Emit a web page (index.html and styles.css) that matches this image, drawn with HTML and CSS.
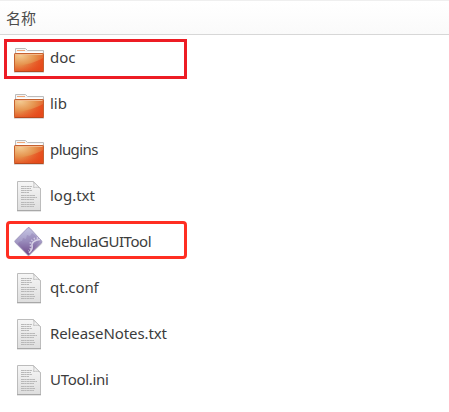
FILE: index.html
```html
<!DOCTYPE html>
<html lang="zh-CN">
<head>
<meta charset="utf-8">
<title>名称</title>
<link rel="stylesheet" href="styles.css">
</head>
<body>
<svg class="defs" width="0" height="0" aria-hidden="true">
  <defs>
    <radialGradient id="orange" cx=".2" cy=".1" r="1">
      <stop offset="0" stop-color="#f3cb92"/><stop offset=".5" stop-color="#e69550"/><stop offset=".85" stop-color="#e5622c"/><stop offset="1" stop-color="#df5120"/>
    </radialGradient>
    <linearGradient id="ember" x1="0" y1="0" x2="1" y2="0">
      <stop offset=".2" stop-color="#e8481a" stop-opacity="0"/><stop offset="1" stop-color="#e8481a" stop-opacity=".8"/>
    </linearGradient>
    <linearGradient id="paper" x1="0" y1="0" x2="0" y2="1">
      <stop offset="0" stop-color="#f6f6f6"/><stop offset="1" stop-color="#dedede"/>
    </linearGradient>
    <linearGradient id="purple" x1="0" y1="0" x2="0" y2="1">
      <stop offset="0" stop-color="#c4c4e3"/><stop offset=".5" stop-color="#a59bc6"/><stop offset="1" stop-color="#704a89"/>
    </linearGradient>
  </defs>
  <symbol id="folder" viewBox="0 0 32 32">
    <path d="M2.500 12V6.500H12.500L14.500 8.500H30.500V12" fill="#f5f5f5" stroke="#bcbcbc"/>
    <path d="M4 8.500H12" stroke="#efa777"/>
    <path d="M4 10.500H29" stroke="#fff"/>
    <path d="M1 30.500H31" stroke="#000" stroke-opacity=".14"/>
    <rect x="1.500" y="11.500" width="29" height="18" rx=".6" fill="url(#orange)" stroke="#c6612f"/>
    <path d="M30 16C23 20 14 23 2 24V29H30Z" fill="url(#ember)"/>
    <path d="M2.500 12.500H29.500" stroke="#f3b98b"/>
    <path d="M1.500 29.500H30.500" stroke="#b8481d"/>
  </symbol>
  <symbol id="file" viewBox="0 0 32 32">
    <path d="M4 31.500H28" stroke="#000" stroke-opacity=".1"/>
    <path d="M4.500 1.500H20.500L27.500 8.500V30.500H4.500Z" fill="url(#paper)" stroke="#bcbcbc"/>
    <path d="M4 30.500H28" stroke="#a8a8a8"/>
    <path d="M20 1.500C21.500 3 21 5.500 20.500 7.500C23 7 26 7 27.500 8.500Z" fill="#f4f4f4" stroke="#c2c2c2"/>
    <path d="M8 6.500H19M8 8.500H18M8 10.500H19M8 12.500H16M8 15.500H22M8 17.500H24M8 19.500H21M8 22.500H21M8 24.500H22M8 26.500H21" stroke="#b8b8b8" stroke-dasharray="3 .3 2 .3"/>
  </symbol>
  <symbol id="app" viewBox="0 0 32 32">
    <path d="M15 2.800 2.500 16 15 29.800 29 16.500Z" transform="translate(.5 1)" fill="#000" opacity=".13"/>
    <path d="M15 1.600Q16 1.300 17 2.300L28.500 14.700Q29.500 16 28.500 17L16.500 28.700Q15.500 29.700 14.500 28.700L2.200 16.500Q1.300 15.500 2.200 14.500Z" fill="url(#purple)" stroke="#9990b8" stroke-width=".8"/>
    <path d="M15.500 28.300 5 18Q6 15 9 15L10 12 13 13 14 9 17 10 19 7 22 9 27 15Z" fill="#66458b" opacity=".2"/>
    <path d="M27 13.500C21 14 18 17 19.200 20.500C19.500 23 18 25 16 27" fill="none" stroke="#d6d0e6" stroke-width="1.500"/>
    <path d="M25 12C19.500 12 16 16 17.800 20.500C18 22.500 17 24 15.500 25" fill="none" stroke="#d0c9e2" stroke-width="1.800" stroke-dasharray="1.300 1.700"/>
  </symbol>
</svg>
<header class="header">名称</header>
<main class="list">
  <div class="row"><svg class="icon"><use href="#folder"/></svg><span class="name">doc</span><i class="mark mark-square"></i></div>
  <div class="row"><svg class="icon"><use href="#folder"/></svg><span class="name">lib</span></div>
  <div class="row"><svg class="icon"><use href="#folder"/></svg><span class="name tight">plugins</span></div>
  <div class="row"><svg class="icon"><use href="#file"/></svg><span class="name">log.txt</span></div>
  <div class="row"><svg class="icon"><use href="#app"/></svg><span class="name snug">NebulaGUITool</span><i class="mark mark-round"></i></div>
  <div class="row"><svg class="icon"><use href="#file"/></svg><span class="name slim">qt.conf</span></div>
  <div class="row"><svg class="icon"><use href="#file"/></svg><span class="name slim">ReleaseNotes.txt</span></div>
  <div class="row"><svg class="icon"><use href="#file"/></svg><span class="name mild">UTool.ini</span></div>
</main>
</body>
</html>
```
FILE: styles.css
```css
* { box-sizing: border-box; }
body {
  margin: 0;
  background: #fff;
  color: #3c3c3c;
  font-family: "Noto Sans", "Noto Sans CJK SC", sans-serif;
  font-size: 15px;
  overflow: hidden;
}
.defs { position: absolute; }
.header {
  height: 35px;
  padding-left: 6px;
  border-top: 1px solid #efefef;
  border-bottom: 1px solid #d7d7d7;
  background: linear-gradient(#fff, #fafafa);
  font-family: "Noto Sans CJK SC", sans-serif;
  line-height: 34px;
  color: #4c4c4c;
}
.row {
  position: relative;
  display: flex;
  align-items: center;
  gap: 5px;
  height: 46px;
  padding-left: 13px;
}
.icon { width: 32px; height: 32px; flex: none; }
.name { line-height: 20px; padding-bottom: 2px; white-space: nowrap; }
.slim { letter-spacing: -0.1px; }
.mild { letter-spacing: -0.3px; }
.snug { letter-spacing: -0.45px; }
.tight { letter-spacing: -0.6px; }
.mark { position: absolute; }
.mark-square {
  left: 4px;
  top: 4px;
  width: 183px;
  height: 40px;
  border: 3px solid #ed1c24;
}
.mark-round {
  left: 5.500px;
  top: 2px;
  width: 181px;
  height: 38px;
  border: 3px solid #ff2e22;
  border-radius: 4px;
}
```
